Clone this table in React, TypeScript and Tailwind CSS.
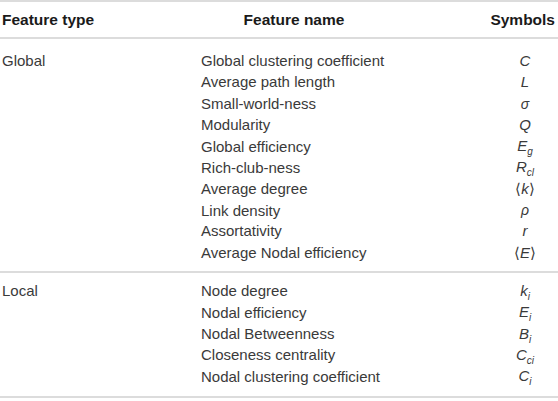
import type { ReactNode } from "react";

function Sym({ base, sub }: { base: ReactNode; sub?: string }) {
  return (
    <span className="italic">
      {base}
      {sub && <span className="align-sub text-[10px] leading-none">{sub}</span>}
    </span>
  );
}

const globalRows: [string, ReactNode][] = [
  ["Global clustering coefficient", <Sym base="C" />],
  ["Average path length", <Sym base="L" />],
  ["Small-world-ness", <span className="italic text-[14px]">σ</span>],
  ["Modularity", <Sym base="Q" />],
  ["Global efficiency", <Sym base="E" sub="g" />],
  ["Rich-club-ness", <Sym base="R" sub="cl" />],
  ["Average degree", <span>⟨<span className="italic">k</span>⟩</span>],
  ["Link density", <span className="italic text-[14px]">ρ</span>],
  ["Assortativity", <Sym base="r" />],
  ["Average Nodal efficiency", <span>⟨<span className="italic">E</span>⟩</span>],
];

const localRows: [string, ReactNode][] = [
  ["Node degree", <Sym base="k" sub="i" />],
  ["Nodal efficiency", <Sym base="E" sub="i" />],
  ["Nodal Betweenness", <Sym base="B" sub="i" />],
  ["Closeness centrality", <Sym base="C" sub="ci" />],
  ["Nodal clustering coefficient", <Sym base="C" sub="i" />],
];

function Group({
  label,
  rows,
  className,
}: {
  label: string;
  rows: [string, ReactNode][];
  className: string;
}) {
  return (
    <div className={`border-b-2 border-[#dcdcdc] ${className}`}>
      {rows.map(([name, sym], i) => (
        <div
          key={name}
          className="grid h-[21.3px] grid-cols-[198px_192px_1fr] items-center leading-[21.3px]"
        >
          <div className="pl-[2px]">{i === 0 ? label : ""}</div>
          <div className="pl-[3px]">{name}</div>
          <div className="ml-auto mr-[3px] w-[60px] text-center">{sym}</div>
        </div>
      ))}
    </div>
  );
}

export default function App() {
  return (
    <div className="h-[401px] w-[558px] bg-white font-['Liberation_Sans',Arial,sans-serif] text-[15px] text-[#3a3a3a]">
      <div className="border-t-2 border-[#dcdcdc]">
        <div className="grid h-[37px] grid-cols-[198px_192px_1fr] items-center border-b-2 border-[#dcdcdc] text-[15.5px] font-bold text-[#1a1a1a]">
          <div className="pl-[2px]">Feature type</div>
          <div className="text-center">Feature name</div>
          <div className="pr-[3px] text-right">Symbols</div>
        </div>
        <Group label="Global" rows={globalRows} className="pb-[8px] pt-[11px]" />
        <Group label="Local" rows={localRows} className="pb-[10px] pt-[7px]" />
      </div>
    </div>
  );
}
